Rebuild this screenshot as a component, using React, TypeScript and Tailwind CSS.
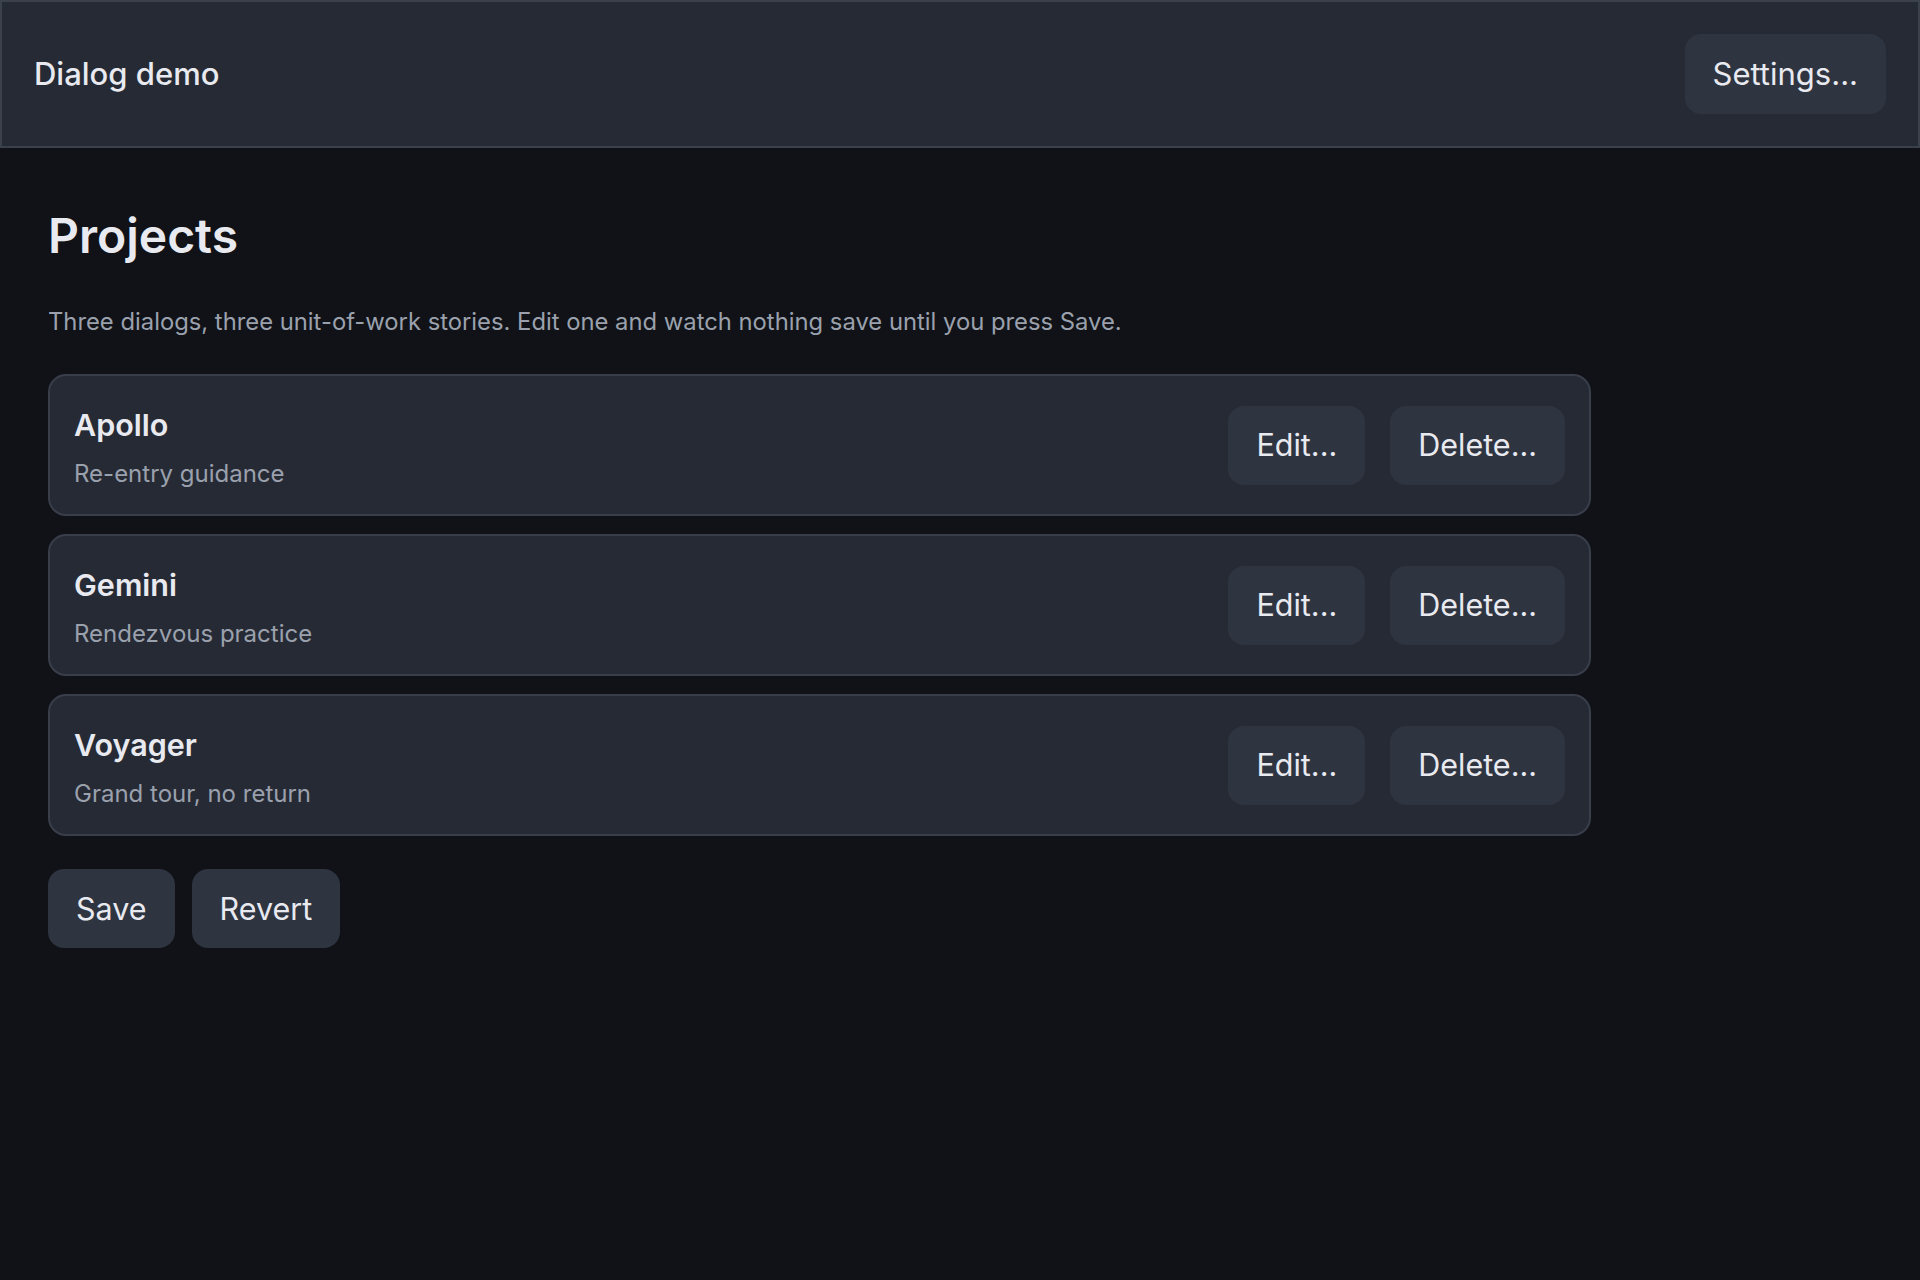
const projects = [
  { name: "Apollo", blurb: "Re-entry guidance" },
  { name: "Gemini", blurb: "Rendezvous practice" },
  { name: "Voyager", blurb: "Grand tour, no return" },
]

function Btn({ children }: { children: React.ReactNode }) {
  return (
    <button className="flex h-[79px] items-center rounded-[16px] bg-[#2f3441] px-[28px] text-[30.5px] text-[#e8eaf0]">
      {children}
    </button>
  )
}

export default function App() {
  return (
    <div className="min-h-[1280px] bg-[#101217] font-['Inter',sans-serif] text-[#e8eaf0]">
      <header className="flex h-[148px] items-center justify-between border-2 border-[#3a404c] bg-[#262a35] pl-[32px] pr-[32px]">
        <span className="text-[31px] font-medium">Dialog demo</span>
        <button className="flex h-[80px] items-center rounded-[16px] bg-[#2f3441] px-[28px] text-[31px]">
          Settings...
        </button>
      </header>

      <main className="w-[1591px] pl-[48px] pt-[56px]">
        <h1 className="text-[48px] font-semibold leading-[64px]">Projects</h1>
        <p className="mt-[38px] text-[23.8px] leading-[32px] text-[#9aa1ad]">
          Three dialogs, three unit-of-work stories. Edit one and watch nothing save until you press Save.
        </p>

        <div className="mt-[36px] flex flex-col gap-[18px]">
          {projects.map((p) => (
            <div
              key={p.name}
              className="flex h-[142px] items-center justify-between rounded-[18px] border-2 border-[#383e4a] bg-[#262a35] pl-[24px] pr-[24px]"
            >
              <div className="flex flex-col gap-[16px] pt-[5px]">
                <span className="text-[30.5px] font-semibold leading-[36px]">{p.name}</span>
                <span className="text-[24px] leading-[30px] text-[#9aa1ad]">{p.blurb}</span>
              </div>
              <div className="flex gap-[25px]">
                <Btn>Edit...</Btn>
                <Btn>Delete...</Btn>
              </div>
            </div>
          ))}
        </div>

        <div className="mt-[33px] flex gap-[17px]">
          <Btn>Save</Btn>
          <Btn>Revert</Btn>
        </div>
      </main>
    </div>
  )
}
